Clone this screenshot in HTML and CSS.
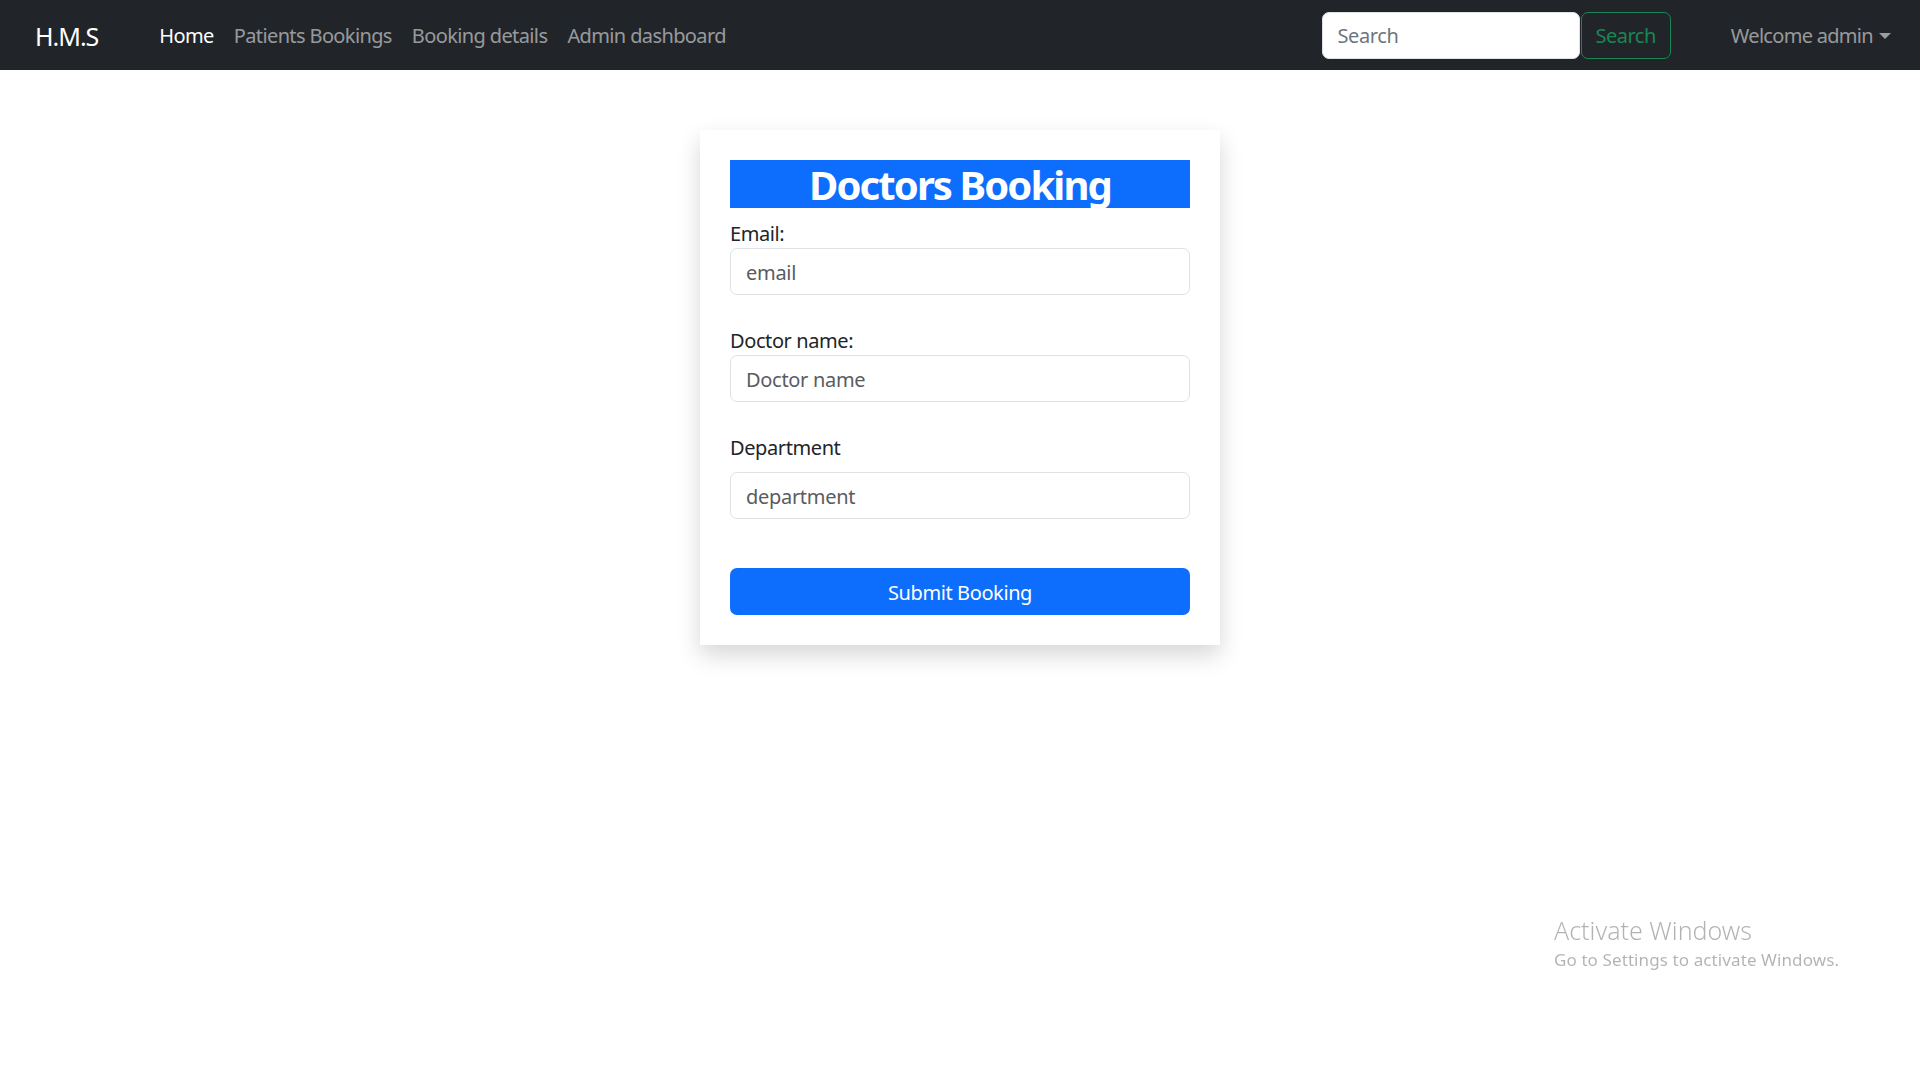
FILE: index.html
```html
<!DOCTYPE html>
<html lang="en">
<head>
<meta charset="utf-8">
<title>H.M.S - Doctors Booking</title>
<link rel="stylesheet" href="styles.css">
</head>
<body>
<nav class="navbar">
  <a class="brand" href="#">H.M.S</a>
  <ul class="nav-links">
    <li><a class="nav-link active" href="#">Home</a></li>
    <li><a class="nav-link" href="#">Patients Bookings</a></li>
    <li><a class="nav-link" href="#">Booking details</a></li>
    <li><a class="nav-link" href="#">Admin dashboard</a></li>
  </ul>
  <form class="search-form">
    <input class="search-input" type="search" placeholder="Search">
    <button class="search-btn" type="button">Search</button>
  </form>
  <div class="user-menu">Welcome admin<span class="caret"></span></div>
</nav>

<main class="page">
  <div class="booking-card">
    <h2 class="card-title">Doctors Booking</h2>
    <label class="field-label">Email:</label>
    <input class="form-control" type="email" placeholder="email">
    <label class="field-label gap-top">Doctor name:</label>
    <input class="form-control" type="text" placeholder="Doctor name">
    <label class="field-label gap-top spaced">Department</label>
    <input class="form-control" type="text" placeholder="department">
    <button class="submit-btn" type="button">Submit Booking</button>
  </div>
</main>

<div class="watermark">
  <div class="wm-title">Activate Windows</div>
  <div class="wm-sub">Go to Settings to activate Windows.</div>
</div>
</body>
</html>
```

FILE: styles.css
```css
* { box-sizing: border-box; }

html, body {
  margin: 0;
  padding: 0;
  background: #fff;
  font-family: "Noto Sans", "Open Sans", sans-serif;
  font-size: 20px;
  color: #212529;
}

.navbar {
  height: 70px;
  background: #212529;
  display: flex;
  align-items: center;
  padding: 1px 29px 0 35px;
}

.brand {
  color: #fff;
  text-decoration: none;
  font-size: 25px;
  margin-right: 51px;
  letter-spacing: -1px;
}

.nav-links {
  list-style: none;
  display: flex;
  margin: 0;
  padding: 0;
  flex: 1;
}

.nav-link {
  display: block;
  padding: 10px 10px;
  color: rgba(255, 255, 255, 0.55);
  text-decoration: none;
  font-size: 20px;
  letter-spacing: -0.62px;
}

.nav-link.active { color: #fff; }

.search-form {
  display: flex;
  align-items: center;
  gap: 1px;
  margin-top: -1px;
}

.search-input {
  width: 258px;
  height: 47px;
  border: 1px solid #dee2e6;
  border-radius: 7px;
  padding: 1px 15px 0;
  font-family: inherit;
  font-size: 20px;
  letter-spacing: -0.4px;
  color: #212529;
  background: #fff;
  outline: none;
}

.search-input::placeholder { color: #6c757d; }

.search-btn {
  height: 47px;
  padding: 1px 14px 0;
  border: 1px solid #198754;
  border-radius: 7px;
  background: transparent;
  color: #198754;
  font-family: inherit;
  font-size: 20px;
  letter-spacing: -0.5px;
}

.user-menu {
  margin-left: 60px;
  color: rgba(255, 255, 255, 0.55);
  font-size: 20px;
  letter-spacing: -0.7px;
  display: flex;
  align-items: center;
}

.caret {
  display: inline-block;
  margin-left: 6px;
  width: 0;
  height: 0;
  border-left: 6px solid transparent;
  border-right: 6px solid transparent;
  border-top: 6px solid rgba(255, 255, 255, 0.55);
}

.page {
  display: flex;
  justify-content: center;
  padding-top: 60px;
  padding-bottom: 40px;
}

.booking-card {
  width: 520px;
  padding: 30px;
  background: #fff;
  box-shadow: 0 10px 22px rgba(0, 0, 0, 0.16);
  display: flex;
  flex-direction: column;
}

.card-title {
  margin: 0 0 10px;
  height: 48px;
  background: #0d6efd;
  color: #fff;
  text-align: center;
  font-size: 40px;
  font-weight: 700;
  line-height: 50px;
  letter-spacing: -1.9px;
  overflow: visible;
}

.field-label {
  display: block;
  line-height: 30px;
  padding-top: 1px;
  height: 30px;
  font-size: 20px;
  letter-spacing: -0.4px;
}

.field-label.gap-top { margin-top: 30px; }
.field-label.spaced { margin-bottom: 10px; }

.form-control {
  display: block;
  width: 100%;
  height: 47px;
  padding: 2px 15px 0;
  border: 1px solid #dee2e6;
  border-radius: 7px;
  font-family: inherit;
  font-size: 20px;
  letter-spacing: -0.3px;
  color: #212529;
  background: #fff;
  outline: none;
}

.form-control::placeholder { color: #595c5f; }

.submit-btn {
  margin-top: 49px;
  height: 47px;
  width: 100%;
  padding-top: 2px;
  border: none;
  border-radius: 7px;
  background: #0d6efd;
  color: #fff;
  font-family: inherit;
  font-size: 20px;
  letter-spacing: -0.4px;
}

.watermark {
  position: fixed;
  left: 1554px;
  top: 915px;
  color: rgba(0, 0, 0, 0.3);
  font-family: "Noto Sans", sans-serif;
  pointer-events: none;
}

.wm-title {
  font-size: 25px;
  font-weight: 300;
  line-height: 31px;
}

.wm-sub {
  font-size: 17px;
  line-height: 24px;
  margin-top: 2px;
  letter-spacing: 0.1px;
}
```
